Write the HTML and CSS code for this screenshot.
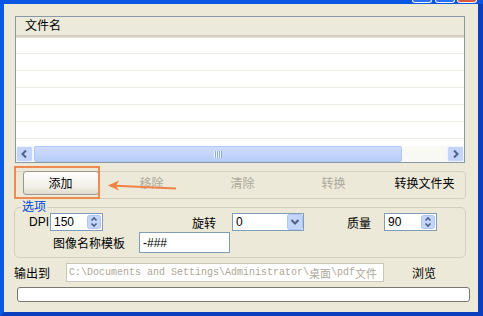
FILE: index.html
```html
<html>

<head>
  <link rel="stylesheet" href="styles.css">
</head>

<body>
  <div class="window">
    <div class="titlebar">
      <span class="tb-btn"></span>
      <span class="tb-btn"></span>
      <span class="tb-btn close"></span>
    </div>
    <div class="frame">
      <div class="client">

        <!-- file list -->
        <div class="list">
          <div class="list-head">文件名</div>
          <div class="list-rows">
            <div class="row"></div>
            <div class="row"></div>
            <div class="row"></div>
            <div class="row"></div>
            <div class="row"></div>
            <div class="row"></div>
            <div class="row"></div>
          </div>
          <div class="hscroll">
            <div class="sb-btn">
              <svg width="17" height="16" viewBox="0 0 17 16">
                <rect x="0.5" y="0.5" width="16" height="15" rx="2" fill="#c4d5fc" stroke="#eef3ff" />
                <path d="M10 4.5 L6.5 8 L10 11.5" fill="none" stroke="#4d6185" stroke-width="2" />
              </svg>
            </div>
            <div class="sb-thumb">
              <svg width="8" height="7" viewBox="0 0 8 7">
                <path d="M0.5 0 V7 M2.5 0 V7 M4.5 0 V7 M6.5 0 V7" stroke="#eef3ff" stroke-width="1" />
                <path d="M1.5 0 V7 M3.5 0 V7 M5.5 0 V7 M7.5 0 V7" stroke="#8caae6" stroke-width="1" />
              </svg>
            </div>
            <div class="sb-track"></div>
            <div class="sb-btn">
              <svg width="17" height="16" viewBox="0 0 17 16">
                <rect x="0.5" y="0.5" width="16" height="15" rx="2" fill="#c4d5fc" stroke="#eef3ff" />
                <path d="M7 4.5 L10.5 8 L7 11.5" fill="none" stroke="#4d6185" stroke-width="2" />
              </svg>
            </div>
          </div>
        </div>

        <!-- actions -->
        <div class="toolbar">
          <div class="tool"><button class="btn">添加</button></div>
          <div class="tool off">移除</div>
          <div class="tool off">清除</div>
          <div class="tool off">转换</div>
          <div class="tool">转换文件夹</div>
        </div>

        <!-- options -->
        <fieldset class="options">
          <legend>选项</legend>
          <div class="opt-row">
            <span class="lbl lbl-dpi">DPI</span>
            <div class="spin">
              <span>150</span>
              <svg width="14" height="14" viewBox="0 0 14 14">
                <rect x="0.5" y="0.5" width="13" height="13" rx="2" fill="#c4d5fc" stroke="#b0c4ee" />
                <path d="M4.5 5.5 L7 3 L9.5 5.5 M4.5 8.5 L7 11 L9.5 8.5" fill="none" stroke="#4d6185" stroke-width="1.6" />
              </svg>
            </div>
            <span class="lbl lbl-rot">旋转</span>
            <div class="combo">
              <span>0</span>
              <svg width="16" height="16" viewBox="0 0 16 16">
                <rect x="0.5" y="0.5" width="15" height="15" rx="2" fill="#c4d5fc" stroke="#b0c4ee" />
                <path d="M4.5 6 L8 9.5 L11.5 6" fill="none" stroke="#4d6185" stroke-width="2" />
              </svg>
            </div>
            <span class="lbl lbl-q">质量</span>
            <div class="spin">
              <span>90</span>
              <svg width="14" height="14" viewBox="0 0 14 14">
                <rect x="0.5" y="0.5" width="13" height="13" rx="2" fill="#c4d5fc" stroke="#b0c4ee" />
                <path d="M4.5 5.5 L7 3 L9.5 5.5 M4.5 8.5 L7 11 L9.5 8.5" fill="none" stroke="#4d6185" stroke-width="1.6" />
              </svg>
            </div>
          </div>
          <div class="opt-row second">
            <span class="lbl lbl-tpl">图像名称模板</span>
            <div class="field tpl">-###</div>
          </div>
        </fieldset>

        <!-- output -->
        <div class="out-row">
          <span class="lbl lbl-out">输出到</span>
          <div class="field path">C:\Documents and Settings\Administrator\<span class="wide">桌面</span>\pdf<span class="wide">文件</span></div>
          <span class="lbl lbl-browse">浏览</span>
        </div>

        <div class="progress"></div>

        <!-- annotation over the add button -->
        <div class="mark"></div>
        <svg class="mark-arrow" width="80" height="16" viewBox="0 0 80 16">
          <path d="M6 7.5 L72 10.5" stroke="#ef8348" stroke-width="2.2" fill="none" />
          <path d="M4 7.5 L15 2.5 L12 7.8 L15 12.5 Z" fill="#ef8348" />
        </svg>
      </div>
    </div>
  </div>
</body>

</html>
```

FILE: styles.css
```css
* {
  box-sizing: border-box;
}

body {
  margin: 0;
  font-family: "Liberation Sans", "Noto Sans CJK SC", sans-serif;
  font-size: 12px;
  color: #000;
}

.window {
  width: 483px;
  height: 316px;
  overflow: hidden;
  background: #0a52dd;
}

/* bottom edge of the XP title bar */
.titlebar {
  height: 4px;
  display: flex;
  justify-content: flex-end;
  padding-right: 6px;
  background: #0a55e2;
}

.tb-btn {
  width: 20px;
  height: 3px;
  margin-left: 3px;
  border: 1px solid #f2f5ff;
  border-top: none;
  border-radius: 0 0 3px 3px;
  background: #2c6ff2;
}

.tb-btn:first-child {
  margin-left: 0;
}

.tb-btn.close {
  margin-left: 2px;
  background: #d6573c;
}

.frame {
  height: 312px;
  border-style: solid;
  border-width: 0 5px 4px 4px;
  border-color: #0841c4 #0b3fbd #0b3fbd #0a5ae6;
}

.client {
  position: relative;
  height: 308px;
  padding-top: 12px;
  background: #ece9d8;
}

/* ---------- list ---------- */

.list {
  margin-left: 11px;
  width: 450px;
  height: 147px;
  border: 1px solid #8a99a8;
  background: #fff;
  display: flex;
  flex-direction: column;
}

.list-head {
  height: 20px;
  padding-left: 9px;
  line-height: 19px;
  background: #ebeadb;
  border-bottom: 2px solid #d3cfbf;
  box-shadow: 0 1px 0 #e4e2d6;
}

.list-rows {
  flex: 1;
  overflow: hidden;
}

.row {
  height: 17px;
  border-bottom: 1px solid #ecebe4;
}

.hscroll {
  height: 16px;
  display: flex;
  background: #f8f8f5;
}

.sb-btn {
  width: 17px;
  height: 16px;
}

.sb-btn svg {
  display: block;
}

.sb-thumb {
  width: 368px;
  margin-left: 1px;
  border: 1px solid #b2c6f3;
  border-radius: 2px;
  background: linear-gradient(#cfdcfd, #b9cdf8);
  display: flex;
  align-items: center;
  justify-content: center;
}

.sb-track {
  flex: 1;
}

/* ---------- actions ---------- */

.toolbar {
  margin: 8px 0 0 10px;
  width: 452px;
  height: 28px;
  border: 1px solid #d4d1c1;
  border-radius: 4px;
  display: grid;
  grid-template-columns: repeat(5, 91px);
}

.tool {
  height: 24px;
  line-height: 24px;
  text-align: center;
  white-space: nowrap;
}

.tool.off {
  color: #aca899;
}

.btn {
  display: block;
  width: 76px;
  height: 24px;
  margin: -1px auto 0;
  padding: 0;
  font: inherit;
  color: #000;
  border: 1px solid #9c9a8c;
  border-radius: 3px;
  background: linear-gradient(#fefefd, #f1efe6 70%, #dedbcd);
}

/* ---------- options ---------- */

.options {
  margin: 2px 0 0 10px;
  width: 452px;
  min-width: 0;
  padding: 0 0 4px 0;
  border: 1px solid #d0cebf;
  border-radius: 5px;
}

.options legend {
  margin-left: 6px;
  padding: 0 1px;
  line-height: 12px;
  color: #0046d5;
}

.opt-row {
  display: flex;
  align-items: center;
  height: 18px;
}

.opt-row.second {
  height: 21px;
  margin-top: 1px;
}

.lbl {
  flex: none;
  white-space: nowrap;
}

.lbl-dpi {
  margin-left: 14px;
  width: 21px;
}

.lbl-rot {
  margin-left: 89px;
  width: 40px;
}

.lbl-q {
  margin-left: 43px;
  width: 37px;
}

.lbl-tpl {
  margin-left: 38px;
  width: 86px;
}

.spin,
.combo,
.field {
  flex: none;
  height: 18px;
  border: 1px solid #7f9db9;
  background: #fff;
  display: flex;
  align-items: center;
}

.spin {
  width: 53px;
  justify-content: space-between;
  padding: 0 1px 0 3px;
}

.combo {
  width: 72px;
  justify-content: space-between;
  padding: 0 0 0 3px;
}

.spin svg,
.combo svg {
  display: block;
}

.field.tpl {
  width: 91px;
  height: 21px;
  padding-left: 3px;
}

/* ---------- output ---------- */

.out-row {
  display: flex;
  align-items: center;
  height: 19px;
  margin-top: 5px;
}

.lbl-out {
  margin-left: 10px;
  width: 52px;
}

.field.path {
  width: 318px;
  height: 19px;
  padding-left: 2px;
  border-color: #c9c7ba;
  color: #aca899;
  font-family: "Liberation Mono", "Noto Sans CJK SC", monospace;
  font-size: 10px;
  white-space: nowrap;
  overflow: hidden;
}

.wide {
  font-family: "Noto Sans CJK SC", sans-serif;
  font-size: 11px;
}

.lbl-browse {
  margin-left: 28px;
}

.progress {
  margin: 5px 0 0 13px;
  width: 453px;
  height: 15px;
  border: 1px solid #787872;
  border-radius: 3px;
  background: #fff;
}

/* ---------- overlays ---------- */

.mark {
  position: absolute;
  left: 10px;
  top: 162px;
  width: 86px;
  height: 33px;
  border: 2px solid #ef8a52;
}

.mark-arrow {
  position: absolute;
  left: 100px;
  top: 174px;
}
```
